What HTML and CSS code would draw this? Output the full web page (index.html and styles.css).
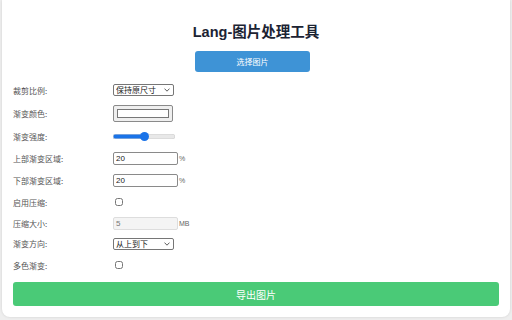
FILE: index.html
```html
<!DOCTYPE html>
<html lang="zh-CN">
<head>
<meta charset="utf-8">
<title>Lang-图片处理工具</title>
<link rel="stylesheet" href="styles.css">
</head>
<body>
<div class="card">
  <h1 class="title">Lang-图片处理工具</h1>
  <div class="pick-wrap"><button class="btn-pick">选择图片</button></div>
  <div class="form">
    <div class="row"><label class="lbl">裁剪比例:</label>
      <span class="sel-wrap"><select class="sel"><option>保持原尺寸</option></select>
      <svg class="chev" width="6" height="4" viewBox="0 0 6 4"><path d="M0.5 0.6 L3 3.2 L5.5 0.6" fill="none" stroke="#333" stroke-width="0.8"/></svg></span></div>
    <div class="row row-tall"><label class="lbl">渐变颜色:</label>
      <input class="color" type="color" value="#ffffff"></div>
    <div class="row"><label class="lbl">渐变强度:</label>
      <input class="range" type="range" min="0" max="100" value="50"></div>
    <div class="row"><label class="lbl">上部渐变区域:</label>
      <input class="txt" type="text" value="20"><span class="unit">%</span></div>
    <div class="row"><label class="lbl">下部渐变区域:</label>
      <input class="txt" type="text" value="20"><span class="unit">%</span></div>
    <div class="row"><label class="lbl">启用压缩:</label>
      <input class="chk" type="checkbox"></div>
    <div class="row row-short"><label class="lbl">压缩大小:</label>
      <input class="txt" type="text" value="5" disabled><span class="unit">MB</span></div>
    <div class="row row-mid"><label class="lbl">渐变方向:</label>
      <span class="sel-wrap"><select class="sel"><option>从上到下</option></select>
      <svg class="chev" width="6" height="4" viewBox="0 0 6 4"><path d="M0.5 0.6 L3 3.2 L5.5 0.6" fill="none" stroke="#333" stroke-width="0.8"/></svg></span></div>
    <div class="row"><label class="lbl">多色渐变:</label>
      <input class="chk" type="checkbox"></div>
  </div>
  <button class="btn-export">导出图片</button>
</div>
</body>
</html>
```

FILE: styles.css
```css
html, body {
  margin: 0;
  padding: 0;
}
body {
  background: #eeeeee;
  font-family: "Noto Sans CJK SC", "Liberation Sans", sans-serif;
  width: 512px;
  height: 320px;
  overflow: hidden;
}
.card {
  box-sizing: border-box;
  margin: 0 2px;
  height: 317px;
  background: #ffffff;
  border-radius: 0 0 8px 8px;
  box-shadow: 0 0 3px rgba(0,0,0,0.12);
  padding: 23px 11px 0 11px;
  display: flex;
  flex-direction: column;
}
.title {
  margin: 0;
  text-align: center;
  font-family: "Liberation Sans", "Noto Sans CJK SC", sans-serif;
  font-size: 14.5px;
  line-height: 18px;
  font-weight: bold;
  color: #1c2333;
}
.pick-wrap {
  display: flex;
  justify-content: center;
  margin-top: 10px;
}
.btn-pick {
  width: 115px;
  height: 21px;
  border: none;
  border-radius: 3px;
  background: #3e93d6;
  color: #ffffff;
  font-family: "Noto Sans CJK SC", sans-serif;
  font-size: 8px;
  padding: 0;
  margin-right: 7px;
}
.form {
  margin-top: 7px;
  display: flex;
  flex-direction: column;
}
.row {
  height: 22px;
  display: flex;
  align-items: center;
}
.row-tall {
  height: 24px;
}
.row-short {
  height: 20px;
}
.row-mid {
  height: 21px;
}
.lbl {
  width: 100px;
  font-size: 8px;
  color: #555555;
}
.sel-wrap {
  position: relative;
  display: inline-flex;
}
.sel {
  -webkit-appearance: none;
  appearance: none;
  box-sizing: border-box;
  width: 61px;
  height: 12px;
  font-size: 8px;
  line-height: 10px;
  padding: 0 0 0 2px;
  margin: 0;
  font-family: "Noto Sans CJK SC", sans-serif;
  color: #222;
  border: 1px solid #767676;
  border-radius: 2px;
  background: #fff;
}
.chev {
  position: absolute;
  right: 4px;
  top: 4px;
  pointer-events: none;
}
.color {
  -webkit-appearance: none;
  box-sizing: border-box;
  width: 60px;
  height: 17px;
  padding: 0;
  margin: 0;
  border: 1px solid #8a8a8a;
  border-radius: 2px;
  background: #efefef;
}
.color::-webkit-color-swatch-wrapper {
  padding: 3px 3px;
}
.color::-webkit-color-swatch {
  border: 1px solid #777;
  border-radius: 0;
}
.range {
  -webkit-appearance: none;
  appearance: none;
  width: 62px;
  height: 9px;
  margin: 0;
  background: transparent;
}
.range::-webkit-slider-runnable-track {
  height: 5px;
  border-radius: 3px;
  background: linear-gradient(to right, #1a73e8 0 50%, #e8e8e8 50% 100%);
  box-shadow: inset 0 0 0 0.5px #d0d0d0;
}
.range::-webkit-slider-thumb {
  -webkit-appearance: none;
  width: 9px;
  height: 9px;
  border-radius: 50%;
  background: #1a73e8;
  margin-top: -2px;
  border: none;
}
.txt {
  box-sizing: border-box;
  width: 65px;
  height: 13px;
  font-size: 8px;
  padding: 0 2px;
  margin: 0;
  border: 1px solid #8a8a8a;
  border-radius: 2px;
  font-family: "Liberation Sans", sans-serif;
  color: #222;
}
.txt:disabled {
  background: #f4f4f4;
  border-color: #dddddd;
  color: #777;
}
.unit {
  font-size: 7px;
  color: #666;
  margin-left: 1px;
  font-family: "Liberation Sans", sans-serif;
}
.chk {
  width: 8px;
  height: 8px;
  margin: 0 0 0 2px;
}
.btn-export {
  margin-top: 6px;
  height: 24px;
  width: 486px;
  border: none;
  border-radius: 3px;
  background: #4aca77;
  color: #ffffff;
  font-family: "Noto Sans CJK SC", sans-serif;
  font-size: 10px;
  padding: 0;
}
```
